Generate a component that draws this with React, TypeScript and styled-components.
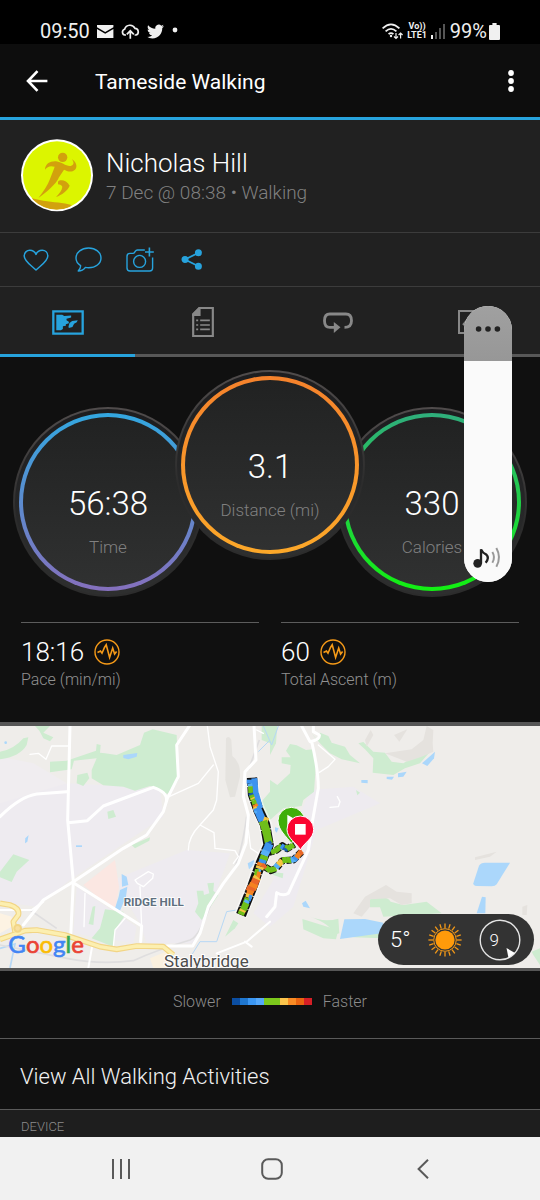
import React from 'react';
import styled, { createGlobalStyle } from 'styled-components';

const BLUE = '#27a3dd';

const GlobalStyle = createGlobalStyle`
  * { box-sizing: border-box; }
  body {
    margin: 0;
    background: #101010;
    color: #fff;
    font-family: Roboto, "Noto Sans", sans-serif;
    font-weight: 300;
  }
  svg { display: block; flex: none; }
  button { font: inherit; color: inherit; background: none; border: 0; padding: 0; cursor: pointer; }
`;

const Screen = styled.div`
  position: relative;
  display: flex;
  flex-direction: column;
  min-height: 100vh;
  overflow: hidden;
`;

/* ---------- status bar ---------- */

const StatusBar = styled.header`
  display: flex;
  align-items: center;
  justify-content: space-between;
  height: 44px;
  padding: 18px 40px 0;
  background: #000;
  color: #f0f0f0;
  font-size: 20px;
  font-weight: 400;
  line-height: 24px;
`;

const StatusGroup = styled.div<{ $gap: number }>`
  display: flex;
  align-items: center;
  gap: ${p => p.$gap}px;
`;

const NetworkLabel = styled.div`
  display: flex;
  flex-direction: column;
  align-items: center;
  font-size: 9px;
  font-weight: 700;
  line-height: 9px;
`;

/* ---------- app bar ---------- */

const AppBar = styled.div`
  display: flex;
  align-items: center;
  height: 76px;
  padding: 0 10px 0 17px;
  background: #0d0d0d;
  border-bottom: 3px solid ${BLUE};
`;

const IconButton = styled.button`
  display: flex;
  align-items: center;
  justify-content: center;
  width: 40px;
  height: 48px;
`;

const AppTitle = styled.h1`
  flex: 1;
  margin: 0 0 0 38px;
  padding-top: 2px;
  font-size: 21px;
  font-weight: 400;
  line-height: 28px;
`;

const MenuButton = styled(IconButton)`
  width: 38px;
`;

/* ---------- profile ---------- */

const Profile = styled.section`
  display: flex;
  align-items: flex-start;
  gap: 13px;
  height: 113px;
  padding: 19px 21px 0;
  background: #212121;
  border-bottom: 1px solid #3c3c3c;
`;

const ProfileText = styled.div`
  padding-top: 7px;
`;

const Name = styled.h2`
  margin: 0;
  font-size: 26px;
  font-weight: 300;
  line-height: 34px;
`;

const When = styled.p`
  margin: 0;
  color: #808080;
  font-size: 19px;
  line-height: 26px;
`;

const Actions = styled.div`
  display: flex;
  align-items: center;
  height: 54px;
  padding-left: 10px;
  background: #212121;
  border-bottom: 1px solid #3c3c3c;
`;

const ActionButton = styled(IconButton)`
  width: 52px;
`;

const Tabs = styled.nav`
  display: grid;
  grid-template-columns: repeat(4, 1fr);
  height: 70px;
  background: #212121;
`;

const Tab = styled.button<{ $active?: boolean }>`
  display: flex;
  align-items: center;
  justify-content: center;
  padding-top: 3px;
  border-bottom: 3px solid ${p => (p.$active ? BLUE : '#585858')};
`;

/* ---------- dials ---------- */

const Dials = styled.section`
  display: flex;
  justify-content: center;
  align-items: flex-end;
  height: 240px;
  padding-top: 13px;
`;

const Dial = styled.div<{ $raised?: boolean }>`
  position: relative;
  z-index: ${p => (p.$raised ? 1 : 0)};
  align-self: ${p => (p.$raised ? 'flex-start' : 'flex-end')};
  flex: none;
  width: 190px;
  height: 190px;
  padding: 4px;
  border: 2px solid transparent;
  border-radius: 50%;
  background:
    linear-gradient(#1d1d1f, #2e2f2f) padding-box,
    linear-gradient(#504c4c, #2c2c2c 60%) border-box;
  & + & { margin-left: -28px; }
`;

const Ring = styled.div<{ $from: string; $to: string }>`
  height: 100%;
  padding: 4px;
  border-radius: 50%;
  background: linear-gradient(${p => p.$from}, ${p => p.$to});
`;

const Face = styled.div`
  display: flex;
  flex-direction: column;
  align-items: center;
  height: 100%;
  padding-top: 66px;
  border-radius: 50%;
  background: linear-gradient(#212222, #303131);
`;

const DialValue = styled.div`
  font-size: 33px;
  line-height: 42px;
`;

const DialLabel = styled.div`
  margin-top: 12px;
  color: #808080;
  font-size: 17px;
  line-height: 20px;
`;

/* ---------- stats ---------- */

const Stats = styled.section`
  display: grid;
  grid-template-columns: 1fr 1fr;
  gap: 22px;
  padding: 25px 21px 32px;
`;

const Stat = styled.div`
  border-top: 1px solid #5c5c5c;
  padding-top: 12px;
`;

const StatValue = styled.div`
  display: flex;
  align-items: center;
  gap: 10px;
  font-size: 26px;
  line-height: 34px;
`;

const StatLabel = styled.div`
  padding-top: 1px;
  color: #909090;
  font-size: 16px;
  line-height: 20px;
`;

/* ---------- map ---------- */

const MapPanel = styled.section`
  position: relative;
  height: 249px;
  border-top: 4px solid #565656;
  border-bottom: 3px solid #565656;
  background: #efedea;
  & > svg { width: 100%; height: 100%; }
`;

const WeatherPill = styled.div`
  position: absolute;
  right: 6px;
  bottom: 3px;
  display: flex;
  align-items: center;
  justify-content: space-between;
  width: 156px;
  height: 51px;
  padding: 0 13px 0 12px;
  border-radius: 26px;
  background: #333;
  font-size: 22px;
`;

/* ---------- footer ---------- */

const Legend = styled.section`
  display: flex;
  align-items: center;
  justify-content: center;
  gap: 11px;
  height: 68px;
  padding-bottom: 6px;
  color: #8c8c8c;
  font-size: 16px;
  border-bottom: 1px solid #5a5a5a;
`;

const Scale = styled.div`
  display: flex;
  width: 80px;
  height: 7px;
`;

const Step = styled.span<{ $color: string }>`
  flex: 1;
  background: ${p => p.$color};
`;

const ViewAll = styled.a`
  display: flex;
  align-items: center;
  height: 71px;
  padding: 4px 20px 0;
  border-bottom: 1px solid #5a5a5a;
  color: #f2f2f2;
  font-size: 22px;
  text-decoration: none;
`;

const DeviceHeading = styled.h3`
  flex: 1;
  margin: 0;
  padding: 8px 21px 0;
  background: #1e1e1e;
  color: #8c8c8c;
  font-size: 13px;
  font-weight: 300;
  line-height: 18px;
`;

const NavBar = styled.nav`
  display: grid;
  grid-template-columns: repeat(3, 1fr);
  height: 63px;
  padding: 0 42px 0 45px;
  background: #f1f1f1;
  color: #5a5a5a;
`;

const NavButton = styled.button`
  display: flex;
  align-items: center;
  justify-content: center;
`;

/* ---------- volume overlay ---------- */

const VolumePanel = styled.div`
  position: absolute;
  z-index: 5;
  top: 306px;
  right: 28px;
  display: flex;
  flex-direction: column;
  width: 48px;
  height: 276px;
  border-radius: 24px;
  overflow: hidden;
  background: #fafafa;
`;

const VolumeMore = styled.button`
  display: flex;
  align-items: center;
  justify-content: center;
  height: 55px;
  background: linear-gradient(#a0a0a0, #979797);
  & svg { margin-bottom: 9px; }
`;

const VolumeSlider = styled.input`
  flex: 1;
  width: 48px;
  margin: 0;
  appearance: none;
  writing-mode: vertical-lr;
  direction: rtl;
  background: #fafafa;
  &::-webkit-slider-thumb { appearance: none; width: 48px; height: 1px; background: #fafafa; }
`;

const VolumeIcon = styled.div`
  display: flex;
  justify-content: center;
  height: 36px;
  background: #fafafa;
`;

/* ---------- data ---------- */

const paceScale = ['#0b4ea2', '#1f77d0', '#3b97f3', '#55a8fa', '#7cc81c', '#7cc81c', '#fcc54c', '#f98b24', '#ea6410', '#d61f26'];

const G = '#6fbf1a';
const B = '#3d93f0';
const L = '#57b0f5';
const Y = '#f6c343';
const O = '#f58220';
const R = '#e9662a';
const D = '#1c5fae';

/* Pace-coloured pieces of the walked route: x1, y1, x2, y2, width, colour. */
const route: [number, number, number, number, number, string][] = [
  [88, 40, 92, 88, 18, B], [92, 86, 104, 130, 20, B], [73, 44, 73, 56, 16, B], [74, 56, 76, 64, 14, L],
  [76, 64, 77, 84, 14, G], [77, 84, 79, 92, 14, D], [79, 90, 84, 106, 14, G], [82, 98, 84, 102, 14, Y],
  [86, 106, 89, 118, 14, G], [89, 118, 93, 126, 16, O], [88, 126, 92, 132, 12, Y], [96, 128, 107, 155, 24, B],
  [90, 138, 93, 144, 8, L], [106, 153, 113, 168, 24, B], [114, 167, 128, 172, 26, Y], [114, 168, 126, 205, 25, G],
  [124, 200, 132, 236, 24, G], [127, 232, 132, 240, 22, D], [134, 236, 124, 258, 24, B], [124, 256, 117, 272, 24, L],
  [119, 272, 114, 286, 24, G], [114, 284, 110, 296, 22, B], [110, 294, 106, 304, 24, O], [112, 298, 122, 310, 12, R],
  [106, 304, 103, 312, 24, Y], [104, 312, 98, 328, 12, L], [96, 312, 92, 336, 12, G], [103, 320, 98, 340, 12, O],
  [98, 336, 92, 344, 24, Y], [94, 342, 86, 360, 24, R], [88, 356, 80, 372, 26, O], [80, 366, 74, 380, 26, R],
  [77, 376, 72, 392, 20, O], [74, 388, 70, 398, 20, Y], [78, 390, 72, 408, 10, B], [66, 398, 60, 414, 14, G],
  [68, 406, 62, 416, 16, L], [64, 414, 54, 436, 20, G], [54, 434, 50, 442, 20, Y], [51, 440, 47, 449, 20, G],
];

const branches: [number, number, number, number, number, string][] = [
  [138, 262, 154, 256, 15, G], [152, 257, 170, 242, 16, G], [168, 242, 178, 248, 16, B], [176, 246, 190, 254, 16, D],
  [186, 252, 206, 239, 16, G], [180, 243, 192, 248, 10, G], [122, 306, 136, 318, 15, G], [134, 316, 154, 310, 16, G],
  [152, 308, 160, 298, 18, L], [160, 300, 172, 286, 18, Y], [172, 286, 186, 284, 18, G], [184, 284, 200, 286, 17, G],
  [198, 286, 212, 282, 17, L], [208, 284, 218, 272, 18, B], [214, 278, 230, 258, 16, O], [224, 264, 232, 260, 16, R],
];

/* ---------- drawings ---------- */

const MapArt = () => (
  <svg viewBox="0 18 1620 726" preserveAspectRatio="xMidYMid slice" role="img" aria-label="Route map around Ridge Hill and Stalybridge">
    <rect x="0" y="0" width="1620" height="760" fill="#efedea" />
    <g fill="#eeebf0">
      <path d="M0 230L205 190L480 205L490 290L210 480L110 560L0 545Z" />
      <path d="M0 110L100 130L200 190L0 250Z" fill="#f0edf0" />
      <path d="M340 480L560 390L690 400L640 540L580 670L440 670L420 610Z" />
      <path d="M230 500L410 620L400 670L220 640Z" />
      <path d="M930 210L1060 200L1140 250L950 330L920 430L880 560L810 620L760 580L820 480Z" />
    </g>
    <path d="M678 55Q688 45 694 60L697 108Q722 125 720 170L705 230L690 232L676 180Z" fill="#e5e3df" />
    <path d="M250 495L345 420L357 500L345 575Z" fill="#fbe7e2" />
    <g fill="#ceecd0">
      <path d="M0 95Q40 90 70 55L85 52L80 75Q60 110 0 118Z" />
      <path d="M105 18L150 18L130 38L160 52L150 64L130 55L118 32Z" />
      <path d="M150 125L200 122L288 92L290 72L302 75L300 98L315 100L350 105L420 75L432 38L458 28L530 45L535 180L520 205L502 222L470 205L450 198L405 212L370 200L310 196L275 175L275 150L290 115L222 122L215 148L150 157Z" />
      <path d="M232 165L262 158L268 175L250 198L230 190Z" />
      <path d="M322 275L340 270L348 290L325 297Z" />
      <path d="M0 455L40 403L88 420L50 455L35 486L0 472Z" />
      <path d="M395 375L450 352L448 362L405 385Z" />
      <path d="M315 568L370 575L372 590L345 630L340 680L275 655L300 625Z" />
      <path d="M278 560L286 558L280 615L266 612Z" />
      <path d="M590 512L610 512L612 525L628 520L622 490L642 488L640 512L655 525L632 560L605 600L585 575L595 550Z" />
      <path d="M780 250L810 215L810 300L790 300Z" />
      <path d="M785 18L820 18L810 70L785 60Z" />
      <path d="M715 610L705 625L675 650L700 600Z" />
    </g>
    <g fill="#ceecd0" transform="translate(810 0)">
      <path d="M0 18L22 18L18 70L0 105Z" />
      <path d="M0 180L22 195L60 160L62 135L35 130L35 112L62 112L48 92L60 72L80 76L108 90L130 88L138 130L132 215L100 240L95 258L40 265L0 300Z" />
      <path d="M125 40L140 60L150 38L175 48L185 68L225 80L240 105L270 130L215 118L180 100L150 70Z" />
      <path d="M265 70L280 66L310 95L345 98L365 125L400 130L440 105L480 95L450 130L405 145L370 165L308 158L310 115L285 88Z" />
      <path d="M97 597L165 618L205 630L198 658L160 655L100 628Z" />
      <path d="M115 588Q160 608 205 596L208 640L190 645Q190 615 115 588Z" />
      <path d="M295 540Q345 520 362 545L400 555L470 545L515 580L340 590L330 562L300 562Z" />
      <path d="M265 635L330 638L335 655L250 652Z" />
      <path d="M0 455L40 460L38 475L10 465Z" />
      <path d="M785 695L810 685L810 735L790 705Z" />
      <path d="M258 210L270 218L262 226Z" />
    </g>
    <g fill="#e5e2de" transform="translate(810 0)">
      <path d="M250 580L285 530L348 495L380 515L425 520L425 550L395 555L360 535L300 538L300 560L275 590Z" />
      <path d="M285 60L302 30L310 45L290 80Z" /><path d="M345 100L425 88L460 60L470 18L490 30L488 70L490 95L455 110L410 125Z" />
      <path d="M372 45L412 28L395 55L388 65Z" /><path d="M615 412L680 395L660 410L615 420Z" /><path d="M757 560L772 555L770 585L757 585Z" />
    </g>
    <g fill="#abd7fb">
      <path d="M370 105L412 99L410 110L385 118L370 114Z" />
      <path d="M365 462L380 470L385 495L366 500Z" />
      <path d="M360 510L382 500L378 530L360 572L345 565L356 530Z" />
      <path d="M76 355L86 345L82 365L75 370Z" /><path d="M228 376H246V381H228Z" /><circle cx="17" cy="68" r="4" />
      <path d="M743 430L762 420L765 432L747 448Z" />
      <path d="M1266 130L1305 95L1302 115L1282 138Z" />
      <path d="M1084 180L1103 180L1103 190L1084 188Z" /><path d="M1160 170L1182 170L1176 179L1160 177Z" /><path d="M1194 160L1220 155L1210 170L1194 172Z" />
      <path d="M1420 490L1437 437Q1442 428 1455 428L1530 428L1490 493Q1486 499 1475 499L1430 498Q1419 497 1420 490Z" />
      <path d="M1430 580L1446 530L1457 532L1456 580Z" />
      <path d="M1033 598L1095 597L1150 608L1145 640L1020 657Z" />
      <path d="M906 550L917 542L930 565L910 560Z" /><path d="M825 322L836 325L830 338L825 332Z" />
    </g>
    <g fill="none" stroke="#b7d8f5" strokeWidth="3">
      <path d="M810 60L775 95M790 18L815 75L835 18M575 705L600 665L650 665L680 575L710 570" />
      <path d="M0 685L45 672L30 744" strokeWidth="5" />
    </g>
    <g fill="none" stroke="#dfdedf" strokeWidth="8">
      <path d="M778 60Q760 110 745 150M740 290Q725 400 700 450L640 530Q600 650 570 660Q470 690 400 722Q300 735 200 715L0 675M90 570L170 625" strokeWidth="5" />
    </g>
    <g fill="none" stroke="#fff" strokeLinejoin="round" strokeLinecap="round">
      <g strokeWidth="4">
        <path d="M90 103L115 100L138 118L155 78L208 78M622 18L630 80L655 155L650 240L640 270L600 315Q565 350 565 390M502 232L595 190L640 135M600 315L642 338L645 385L705 392L715 410L700 430M412 490L405 480L445 455L460 462L458 475L430 500L412 490M420 500L425 620M255 520L252 620M340 680L345 630L375 595M745 330L752 385L775 400" />
        <path d="M955 75L1005 118L985 140L958 157M990 262L1015 260L1020 245L1012 230M770 30L790 40" />
      </g>
      <g strokeWidth="9">
        <path d="M210 18L203 300L220 485L212 650M0 290Q60 230 110 222L200 215M205 308L262 302L310 258L390 228L460 202Q500 215 500 240" />
        <path d="M568 18L530 75L535 170L502 235L490 275L440 345L370 385L220 485L130 540L70 615M220 488L425 618L422 665M500 678H578L600 640L625 560L670 490L715 430L738 370L745 285L730 230L735 155L768 120L762 18" />
        <path d="M0 570L95 570L130 545M810 605L740 665L650 700M735 665L755 680M278 670L265 744" strokeWidth="6" />
        <path d="M905 18L930 65Q960 60 958 45L940 35V18M935 65Q955 150 955 205L938 300L925 390L865 520Q850 530 830 518L825 560L800 590" />
      </g>
    </g>
    <path d="M0 580L35 590L35 620L0 640Z" fill="#fdf3e3" />
    <path d="M450 715L510 690L540 744H460Z" fill="#fbf1df" />
    <g fill="none" strokeLinejoin="round">
      <path d="M0 658L75 632L110 630L195 645L300 680L350 688L410 678L490 680L520 705M0 550L30 555Q60 565 55 585L40 605L45 635" stroke="#f2d585" strokeWidth="17" />
      <path d="M0 658L75 632L110 630L195 645L300 680L350 688L410 678L490 680L520 705M0 550L30 555Q60 565 55 585L40 605L45 635" stroke="#fcefb0" strokeWidth="10" />
      <circle cx="53" cy="625" r="10" fill="#f8dfa0" stroke="#f2d585" strokeWidth="6" />
    </g>

    <g transform="translate(675 135)" fill="none" strokeLinejoin="round">
      <path d="M81 36L84 88L101 135L121 178L131 240L104 300L80 370L46 452" stroke="#fff" strokeWidth="40" strokeOpacity=".5" />
      <path d="M81 38L84 88L100 135L120 178L131 240L105 300L80 370L48 450" stroke="#111" strokeWidth="31" strokeDasharray="24 3 40 2" />
      <path d="M132 262L154 256L172 242L186 251L208 238M120 306L138 317L154 310L172 287L205 285L232 258" stroke="#111" strokeWidth="21" strokeDasharray="15 5" />
      {[...branches, ...route].map(([x1, y1, x2, y2, w, c], i) => (
        <line key={i} x1={x1} y1={y1} x2={x2} y2={y2} stroke={c} strokeWidth={w} />
      ))}
    </g>

    <g transform="translate(810 0)" stroke="#fff" strokeWidth="3">
      <path d="M64 370C50 350 24 330 24 302A40 40 0 0 1 104 302C104 330 78 350 64 370Z" fill="#3fae0a" />
      <path d="M52 284L84 303L52 322Z" fill="#fff" stroke="none" />
      <path d="M91 390C80 368 51 356 51 328A40 40 0 0 1 131 328C131 356 102 368 91 390Z" fill="#fb0632" />
      <rect x="75" y="312" width="32" height="32" fill="#fff" stroke="none" />
    </g>

    <text x="371" y="559" fontFamily="Roboto, sans-serif" fontSize="35" fontWeight="700" fill="#60707f" stroke="#fff" strokeWidth="5" paintOrder="stroke">RIDGE HILL</text>
    <text x="492" y="742" fontFamily="Roboto, sans-serif" fontSize="51" fontWeight="400" fill="#4d4d4d" stroke="#fff" strokeWidth="6" paintOrder="stroke">Stalybridge</text>
    <text x="25" y="699" fontFamily="Lato, sans-serif" fontSize="72" fontWeight="400" strokeWidth="2">
      <tspan fill="#4285f4" stroke="#4285f4">G</tspan><tspan fill="#ea4335" stroke="#ea4335">o</tspan><tspan fill="#fbbc05" stroke="#fbbc05">o</tspan><tspan fill="#4285f4" stroke="#4285f4">g</tspan><tspan fill="#34a853" stroke="#34a853">l</tspan><tspan fill="#ea4335" stroke="#ea4335">e</tspan>
    </text>
  </svg>
);

const Avatar = () => (
  <svg width="72" height="73" viewBox="63 72 216 219" role="img" aria-label="Nicholas Hill">
    <defs><clipPath id="avatarClip"><circle cx="171" cy="181" r="103" /></clipPath></defs>
    <circle cx="171" cy="181" r="108" fill="#fff" />
    <circle cx="171" cy="181" r="102" fill="#dcf500" />
    <g fill="#d2a10d" clipPath="url(#avatarClip)">
      <circle cx="188" cy="127" r="14" />
      <path d="M135 164C136 146 150 138 168 139C186 141 198 155 212 153C222 150 223 143 216 133C228 140 234 156 225 164C214 174 200 168 192 164L177 187C168 208 140 232 115 249C130 230 143 211 150 192C155 178 160 168 164 155C150 151 142 155 135 164Z" />
      <path d="M174 200C180 192 200 195 209 212C202 228 186 239 168 246C178 236 186 226 187 215C184 210 178 208 174 208Z" />
      <path d="M95 250L130 257C160 262 190 262 215 270C200 290 120 295 95 250Z" />
    </g>
  </svg>
);

const PulseIcon = () => (
  <svg width="26" height="26" viewBox="0 0 26 26" fill="none" stroke="#f59a18" aria-hidden="true">
    <circle cx="13" cy="13" r="12" strokeWidth="1.4" />
    <path d="M3.5 13.5L6.5 12L8 14.2L10.5 8.5L12.2 5.8L15.6 18.5L18.7 9L20.6 15L22.6 12.5" strokeWidth="1.6" />
  </svg>
);

const Sun = () => (
  <svg width="34" height="34" viewBox="-17 -17 34 34" aria-label="Sunny" role="img">
    <circle r="9.6" fill="#ff9a0a" /><circle r="11.3" fill="none" stroke="#f59a18" strokeWidth="1" />
    {Array.from({ length: 20 }, (_, i) => (
      <line key={i} y1="-12" y2="-16.6" stroke="#f59a18" strokeWidth="1.3" transform={`rotate(${i * 18})`} />
    ))}
  </svg>
);

const Wind = () => (
  <svg width="42" height="42" viewBox="0 0 42 42" aria-label="Wind 9" role="img">
    <circle cx="21" cy="21" r="19.8" fill="none" stroke="#e4e4e4" strokeWidth="1.4" />
    <path d="M27.5 29L36 34L29.5 39L28.5 34Z" fill="#fff" />
    <text x="10.5" y="26.5" fontFamily="Roboto, sans-serif" fontWeight="300" fontSize="17" fill="#fff">9</text>
  </svg>
);

const dials = [
  { value: '56:38', label: 'Time', from: '#33a7e0', to: '#8570bd' },
  { value: '3.1', label: 'Distance (mi)', from: '#f5822c', to: '#fca829', raised: true },
  { value: '330', label: 'Calories', from: '#2fae7c', to: '#12f012' },
];

const stats = [
  { value: '18:16', label: 'Pace (min/mi)' },
  { value: '60', label: 'Total Ascent (m)' },
];

export default function App() {
  return (
    <Screen>
      <GlobalStyle />
      <StatusBar>
        <StatusGroup $gap={7}>
          <span>09:50</span>
          <svg width="17" height="13" viewBox="0 0 17 13" aria-hidden="true">
            <path d="M0 0H16.4V2.3L8.2 7L0 2.3Z" fill="#f0f0f0" /><path d="M0 4.1L8.2 8.7L16.4 4.1V13H0Z" fill="#f0f0f0" />
          </svg>
          <svg width="19" height="15" viewBox="0 0 19 15" fill="none" stroke="#f0f0f0" strokeWidth="1.7" aria-hidden="true">
            <path d="M5 11H3.8A3 3 0 0 1 3.6 5.2A5.6 5.6 0 0 1 14 4.4A3.4 3.4 0 0 1 15 11H13.6" />
            <path d="M9.3 14.8V7.5M5.8 10.3L9.3 6.8L12.8 10.3" />
          </svg>
          <svg width="17" height="15" viewBox="0 2 24 20" fill="#f0f0f0" aria-hidden="true">
            <path d="M23.95 4.57a10 10 0 0 1-2.82.77 4.96 4.96 0 0 0 2.16-2.72c-.95.55-2 .96-3.13 1.18a4.92 4.92 0 0 0-8.38 4.48C7.69 8.1 4.07 6.13 1.64 3.16a4.82 4.82 0 0 0-.67 2.48c0 1.71.87 3.21 2.19 4.1a4.9 4.9 0 0 1-2.23-.62v.06a4.92 4.92 0 0 0 3.95 4.83 5 5 0 0 1-2.21.08 4.94 4.94 0 0 0 4.6 3.42A9.87 9.87 0 0 1 0 19.54a14 14 0 0 0 7.55 2.21c9.05 0 14-7.5 14-13.98 0-.21 0-.42-.02-.63a9.94 9.94 0 0 0 2.42-2.57z" />
          </svg>
          <svg width="10" height="14" viewBox="0 0 10 14" aria-hidden="true"><circle cx="4" cy="6" r="2.4" fill="#f0f0f0" /></svg>
        </StatusGroup>
        <StatusGroup $gap={4}>
          <svg width="21" height="17" viewBox="0 0 21 17" fill="none" stroke="#f0f0f0" strokeWidth="1.8" aria-hidden="true">
            <path d="M.6 5.3Q9 -2.6 17.4 5.3M3.6 8.4Q9 3.4 14.4 8.4M6.6 11.2Q9 9 11.4 11.2" />
            <circle cx="9" cy="13" r="1.2" fill="#f0f0f0" stroke="none" />
            <path d="M14 10V15.5M12 13.5L14 15.5L16 13.5M18.6 15.5V10M16.6 12L18.6 10L20.6 12" strokeWidth="1.2" />
          </svg>
          <NetworkLabel><span>Vo))</span><span>LTE1</span></NetworkLabel>
          <svg width="15" height="16" viewBox="0 0 15 16" aria-hidden="true">
            <path d="M0 12H2V16H0Z" fill="#f0f0f0" /><path d="M4 9H6V16H4ZM8 5H10V16H8ZM12 1H14V16H12Z" fill="#555" />
          </svg>
          <StatusGroup $gap={2}>
            <span>99%</span>
            <svg width="11" height="17" viewBox="0 0 11 17" fill="#f0f0f0" aria-hidden="true">
              <path d="M3.4 0H7.6V2H10Q11 2 11 3V16Q11 17 10 17H1Q0 17 0 16V3Q0 2 1 2H3.4Z" />
            </svg>
          </StatusGroup>
        </StatusGroup>
      </StatusBar>

      <AppBar>
        <IconButton aria-label="Back">
          <svg width="22" height="22" viewBox="0 0 22 22" fill="none" stroke="#fff" strokeWidth="2.6">
            <path d="M11.5 1.2L2 11L11.5 20.8M2 11H21.4" />
          </svg>
        </IconButton>
        <AppTitle>Tameside Walking</AppTitle>
        <MenuButton aria-label="More options">
          <svg width="6" height="22" viewBox="0 0 6 22" fill="#fff"><circle cx="3" cy="3" r="2.9" /><circle cx="3" cy="11" r="2.9" /><circle cx="3" cy="19" r="2.9" /></svg>
        </MenuButton>
      </AppBar>

      <Profile>
        <Avatar />
        <ProfileText>
          <Name>Nicholas Hill</Name>
          <When>7 Dec @ 08:38 • Walking</When>
        </ProfileText>
      </Profile>

      <Actions>
        <ActionButton aria-label="Like">
          <svg width="26" height="22" viewBox="0 0 26 22" fill="none" stroke={BLUE} strokeWidth="1.5" strokeLinejoin="round">
            <path d="M13 21C9 17 1.2 12.5 1.2 7C1.2 3.5 3.8 1.3 6.8 1.3C9.6 1.3 12 3 13 5.4C14 3 16.4 1.3 19.2 1.3C22.2 1.3 24.8 3.5 24.8 7C24.8 12.5 17 17 13 21Z" />
          </svg>
        </ActionButton>
        <ActionButton aria-label="Comment">
          <svg width="27" height="25" viewBox="0 0 27 25" fill="none" stroke={BLUE} strokeWidth="1.4" strokeLinejoin="round">
            <path d="M5.6 18.6C2.7 16.8 1 14 1 11C1 5.4 6.6 1 13.6 1C20.6 1 26 5.4 26 11C26 16.6 20.6 20.7 13.6 20.7C12.4 20.7 11.4 20.6 10.4 20.4C8.8 22.6 6.2 24 3.2 24C4.8 22.4 5.8 20.6 5.6 18.6Z" />
          </svg>
        </ActionButton>
        <ActionButton aria-label="Add photo">
          <svg width="28" height="25" viewBox="0 0 28 25" fill="none" stroke={BLUE} strokeWidth="1.4">
            <path d="M18.8 3H11.4Q10 3 9.4 4.2L8.4 5.7Q8 6.4 7 6.4H4Q1 6.4 1 9.4V21Q1 24 4 24H23.6Q26.6 24 26.6 21V10.6" />
            <circle cx="13.6" cy="14.4" r="6" />
            <path d="M23.4 .6V9.4M19 5H27.8" strokeWidth="1.6" />
          </svg>
        </ActionButton>
        <ActionButton aria-label="Share">
          <svg width="22" height="21" viewBox="0 0 22 21" fill={BLUE} stroke={BLUE} strokeWidth="1.8">
            <path d="M17.5 3.8L4 10.5L17.5 17.2" fill="none" />
            <circle cx="17.4" cy="3.8" r="2.6" /><circle cx="4" cy="10.5" r="2.6" /><circle cx="17.4" cy="17.2" r="2.6" />
          </svg>
        </ActionButton>
      </Actions>

      <Tabs>
        <Tab $active aria-label="Map">
          <svg width="32" height="25" viewBox="155 583 97 75">
            <path d="M159 587H248V654H159Z" fill="none" stroke={BLUE} strokeWidth="7" />
            <path d="M168 597H186L192 601L213 599V605L199 609V614L206 618V623L197 626V630L188 632V640L182 644H168Z" fill={BLUE} />
            <path d="M205 633L208 622L216 616L233 614L230 620L222 624L217 634L206 637Z" fill={BLUE} />
          </svg>
        </Tab>
        <Tab aria-label="Details">
          <svg width="22" height="30" viewBox="575 576 65 90" fill="none" stroke="#888" strokeWidth="6.5">
            <path d="M597 579H637V663H578V598Z" />
            <path d="M578 598L597 579V600H578Z" fill="#888" />
            <path d="M587 616H593M599 616H628M587 630H593M599 630H628M587 643H593M599 643H628" strokeWidth="5" />
          </svg>
        </Tab>
        <Tab aria-label="Laps">
          <svg width="30" height="21" viewBox="158 100 89 63">
            <path d="M192 146H178Q162 146 162 126Q162 106 178 106H226Q243 106 243 126Q243 146 222 146" fill="none" stroke="#888" strokeWidth="8.5" />
            <path d="M190 130L210 146L190 163Z" fill="#888" />
          </svg>
        </Tab>
        <Tab aria-label="Charts">
          <svg width="30" height="24" viewBox="0 0 30 24" fill="none" stroke="#888" strokeWidth="2">
            <path d="M1 1H29V23H1Z" /><path d="M5 15L10 9L15 15L25 6" />
          </svg>
        </Tab>
      </Tabs>

      <Dials>
        {dials.map(d => (
          <Dial key={d.label} $raised={d.raised}>
            <Ring $from={d.from} $to={d.to}>
              <Face>
                <DialValue>{d.value}</DialValue>
                <DialLabel>{d.label}</DialLabel>
              </Face>
            </Ring>
          </Dial>
        ))}
      </Dials>

      <Stats>
        {stats.map(s => (
          <Stat key={s.label}>
            <StatValue>{s.value}<PulseIcon /></StatValue>
            <StatLabel>{s.label}</StatLabel>
          </Stat>
        ))}
      </Stats>

      <MapPanel>
        <MapArt />
        <WeatherPill>
          <span>5°</span>
          <Sun />
          <Wind />
        </WeatherPill>
      </MapPanel>

      <Legend>
        <span>Slower</span>
        <Scale>{paceScale.map((c, i) => <Step key={i} $color={c} />)}</Scale>
        <span>Faster</span>
      </Legend>

      <ViewAll href="#activities">View All Walking Activities</ViewAll>
      <DeviceHeading>DEVICE</DeviceHeading>

      <NavBar>
        <NavButton aria-label="Recent apps">
          <svg width="20" height="20" viewBox="0 0 20 20" stroke="currentColor" strokeWidth="2"><path d="M2 0V20M10 0V20M18 0V20" /></svg>
        </NavButton>
        <NavButton aria-label="Home">
          <svg width="22" height="22" viewBox="0 0 22 22" fill="none" stroke="currentColor" strokeWidth="2"><rect x="1.2" y="1.2" width="19.6" height="19.6" rx="6" /></svg>
        </NavButton>
        <NavButton aria-label="Back">
          <svg width="12" height="20" viewBox="0 0 12 20" fill="none" stroke="currentColor" strokeWidth="2"><path d="M11 .8L1.6 10L11 19.2" /></svg>
        </NavButton>
      </NavBar>

      <VolumePanel>
        <VolumeMore aria-label="Sound settings">
          <svg width="26" height="8" viewBox="0 0 26 8" fill="#222"><circle cx="3.6" cy="4" r="2.8" /><circle cx="13" cy="4" r="2.8" /><circle cx="22.4" cy="4" r="2.8" /></svg>
        </VolumeMore>
        <VolumeSlider type="range" aria-label="Media volume" min="0" max="100" defaultValue="100" />
        <VolumeIcon>
          <svg width="30" height="22" viewBox="612 800 90 66" fill="none" stroke="#222" strokeWidth="7">
            <circle cx="626" cy="852" r="13" fill="#222" stroke="none" />
            <path d="M636 852V810Q640 820 652 826Q662 836 650 850" />
            <path d="M670 818Q680 834 670 850M682 806Q698 834 682 862" stroke="#999" strokeWidth="6" />
          </svg>
        </VolumeIcon>
      </VolumePanel>
    </Screen>
  );
}
